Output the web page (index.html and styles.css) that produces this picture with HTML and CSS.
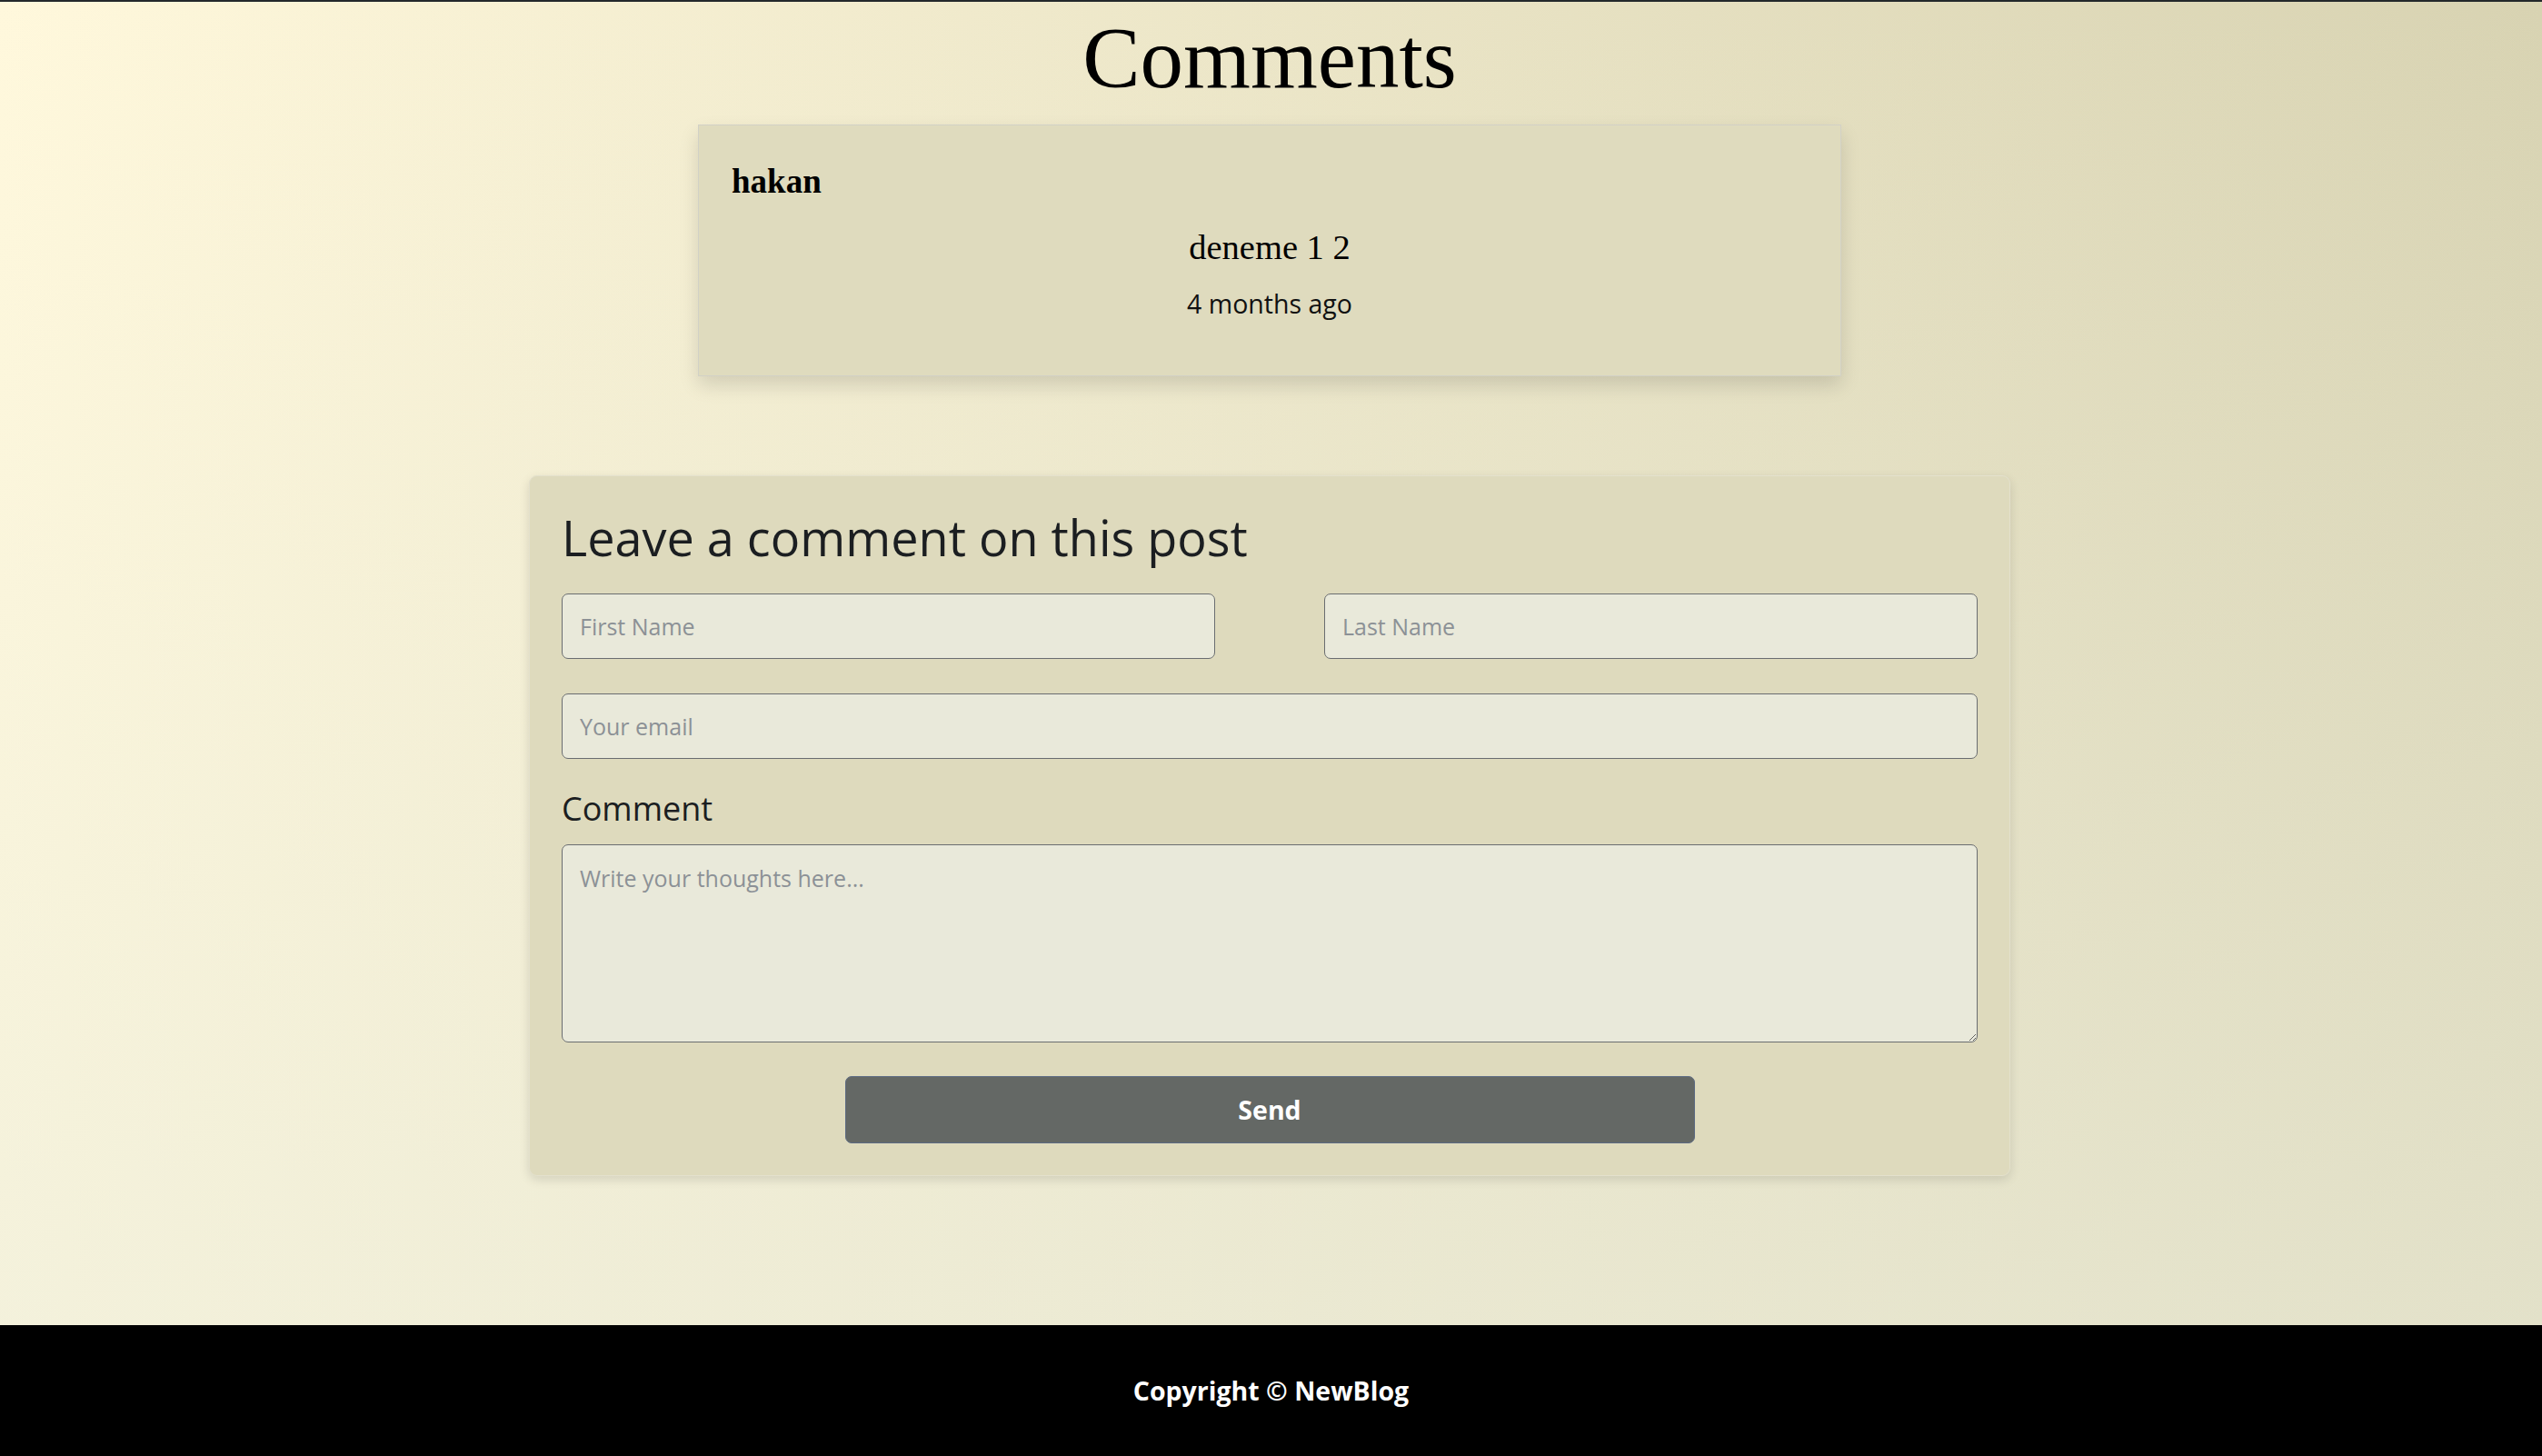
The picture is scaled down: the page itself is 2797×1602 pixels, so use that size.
FILE: index.html
```html
<!DOCTYPE html>
<html lang="en">
<head>
<meta charset="utf-8">
<title>Comments</title>
<link rel="stylesheet" href="styles.css">
</head>
<body>
<main class="page">
  <h1 class="title">Comments</h1>
  <section class="comment-card">
    <h5 class="comment-author">hakan</h5>
    <p class="comment-text">deneme 1 2</p>
    <p class="comment-time">4 months ago</p>
  </section>
  <section class="form-card">
    <h3 class="form-title">Leave a comment on this post</h3>
    <form class="form">
      <div class="name-row">
        <input class="field" type="text" placeholder="First Name">
        <input class="field" type="text" placeholder="Last Name">
      </div>
      <input class="field field-email" type="email" placeholder="Your email">
      <label class="label">Comment</label>
      <textarea class="field textarea" placeholder="Write your thoughts here..."></textarea>
      <div class="actions"><button class="send" type="button">Send</button></div>
    </form>
  </section>
</main>
<footer class="footer">Copyright © NewBlog</footer>
</body>
</html>
```

FILE: styles.css
```css
html, body {
  margin: 0;
  padding: 0;
}

body {
  min-height: 100vh;
  box-sizing: border-box;
  border-top: 2px solid #23282b;
  display: flex;
  flex-direction: column;
  font-family: "Open Sans", "Liberation Sans", sans-serif;
  color: #212529;
  background:
    linear-gradient(to bottom, rgba(235, 236, 219, 0) 0%, rgba(235, 236, 219, 0.62) 100%),
    linear-gradient(to right, #fff8dc 0%, #d8d3b2 100%);
}

.page {
  flex: 1;
  display: flex;
  flex-direction: column;
  align-items: center;
  padding-right: 3px;
}

.title {
  font-family: "Liberation Serif", "Times New Roman", serif;
  font-weight: 400;
  font-size: 95px;
  line-height: 108px;
  margin: 8px 0 19px;
  color: #000;
}

.comment-card {
  width: 1258px;
  box-sizing: border-box;
  background: #dfdbbe;
  border: 1px solid #d2d1c6;
  padding: 40px 36px 57px;
  box-shadow: 0 10px 20px rgba(0, 0, 0, 0.13);
}

.comment-author {
  font-family: "Liberation Serif", "Times New Roman", serif;
  font-weight: 700;
  font-size: 37px;
  line-height: 43px;
  margin: 0 0 23px;
  color: #000;
}

.comment-text {
  font-family: "Liberation Serif", "Times New Roman", serif;
  font-size: 38.5px;
  line-height: 57px;
  margin: 0 0 12px;
  text-align: center;
  color: #000;
}

.comment-time {
  font-size: 28.5px;
  line-height: 43px;
  margin: 0;
  text-align: center;
  color: #111;
}

.form-card {
  width: 1630px;
  box-sizing: border-box;
  margin: 109px 0 163px;
  background: #dedabd;
  border: 1px solid #e4e1cd;
  border-radius: 9px;
  padding: 35px;
  box-shadow: 0 4px 12px rgba(0, 0, 0, 0.12);
}

.form-title {
  font-weight: 400;
  font-size: 54px;
  line-height: 65px;
  margin: 0 0 29px;
  color: #1b1e21;
}

.form {
  display: flex;
  flex-direction: column;
}

.name-row {
  display: grid;
  grid-template-columns: 719px 719px;
  justify-content: space-between;
}

.field {
  box-sizing: border-box;
  height: 72px;
  width: 100%;
  padding: 0 19px;
  font-family: "Open Sans", "Liberation Sans", sans-serif;
  font-size: 25px;
  color: #212529;
  background: #e9e9da;
  border: 1.5px solid #6a6d70;
  border-radius: 7px;
  outline: none;
}

.field::placeholder {
  color: #8c9196;
  opacity: 1;
}

.field-email {
  margin-top: 38px;
}

.label {
  margin-top: 28px;
  font-size: 36px;
  line-height: 54px;
  color: #1b1e21;
}

.textarea {
  margin-top: 12px;
  height: 218px;
  padding: 18px 19px 17px;
  line-height: 1.5;
  resize: vertical;
}

.actions {
  display: flex;
  justify-content: center;
  margin-top: 37px;
}

.send {
  width: 935px;
  height: 74px;
  box-sizing: border-box;
  background: #646865;
  border: 1.5px solid #5d6b83;
  border-radius: 7px;
  color: #fff;
  font-family: "Open Sans", "Liberation Sans", sans-serif;
  font-weight: 700;
  font-size: 28.5px;
}

.footer {
  height: 144px;
  background: #000;
  color: #fff;
  display: flex;
  align-items: center;
  justify-content: center;
  font-weight: 700;
  font-size: 28.5px;
}
```
